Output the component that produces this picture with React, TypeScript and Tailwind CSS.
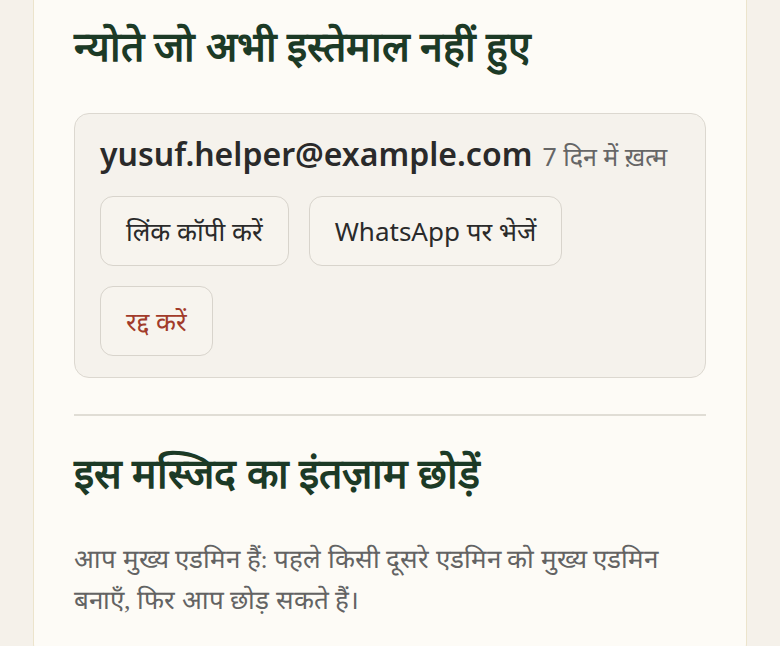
const ui = { fontFamily: '"Noto Sans", "Noto Sans Devanagari", sans-serif' };
const deva = { fontFamily: '"Liberation Serif", serif' };

export default function App() {
  return (
    <div className="min-h-[646px] overflow-hidden bg-[#f5f1ea] px-[33px]">
      <div className="-mt-[40px] rounded-[18px] border border-[#ece4cc] bg-[#fdfbf6] px-[40px] pt-[58px] pb-[40px]">
        {/* Pending invites */}
        <h2 style={deva} className="text-[41px] leading-[56px] font-bold text-[#1c3a26]">न्योते जो अभी इस्तेमाल नहीं हुए</h2>

        <div style={ui} className="mt-[38px] rounded-[15px] border border-[#dcd8d0] bg-[#f5f2ec] px-[25px] pt-[18px] pb-[21px]">
          <div className="flex items-baseline gap-[10px]">
            <span className="text-[32px] leading-[44px] font-semibold text-[#2a2a2a]">yusuf.helper@example.com</span>
            <span className="text-[25px] text-[#666]">7 दिन में ख़त्म</span>
          </div>
          <div className="mt-[20px] flex flex-wrap gap-[20px] max-w-[480px]">
            <button className="h-[70px] rounded-[13px] border border-[#d8d4cc] bg-[#f7f4ee] px-[25px] text-[26px] text-[#2a2a2a]">
              लिंक कॉपी करें
            </button>
            <button className="h-[70px] rounded-[13px] border border-[#d8d4cc] bg-[#f7f4ee] px-[25px] text-[26px] text-[#2a2a2a]">
              WhatsApp पर भेजें
            </button>
            <button className="h-[70px] rounded-[13px] border border-[#d8d4cc] bg-[#f7f4ee] px-[25px] text-[26px] text-[#a23b2a]">
              रद्द करें
            </button>
          </div>
        </div>

        <div className="mt-[36px] h-[2px] bg-[#e0ddd5]" />

        {/* Leave */}
        <h2 style={deva} className="mt-[30px] text-[41px] leading-[56px] font-bold text-[#1c3a26]">इस मस्जिद का इंतज़ाम छोड़ें</h2>
        <p style={deva} className="mt-[37px] max-w-[610px] text-[26px] leading-[41px] text-[#636363]">
          आप मुख्य एडमिन हैं: पहले किसी दूसरे एडमिन को मुख्य एडमिन बनाएँ, फिर आप छोड़ सकते हैं।
        </p>
      </div>
    </div>
  );
}
